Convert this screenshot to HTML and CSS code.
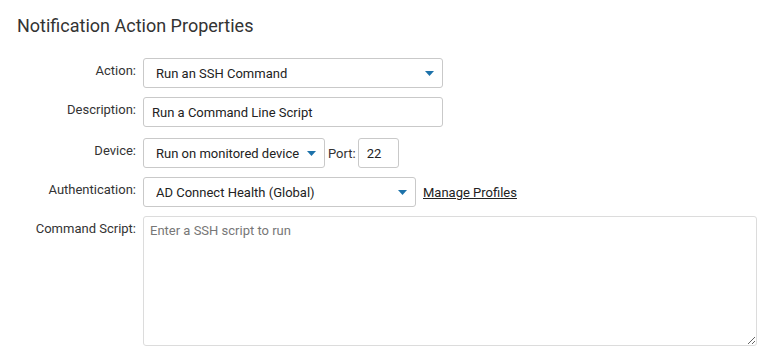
FILE: index.html
```html
<!DOCTYPE html>
<html lang="en">
<head>
  <meta charset="UTF-8">
  <meta name="viewport" content="width=device-width, initial-scale=1.0">
  <title>Notification Action Properties</title>
  <link rel="stylesheet" href="styles.css">
</head>
<body>
  <div class="panel">
    <h2>Notification Action Properties</h2>

    <div class="form">
      <label for="action">Action:</label>
      <div class="field">
        <div class="select-wrap wide">
          <select id="action">
            <option>Run an SSH Command</option>
          </select>
          <svg class="arrow" width="9" height="5" viewBox="0 0 9 5"><path d="M0 0h9L4.5 5z"/></svg>
        </div>
      </div>

      <label for="description">Description:</label>
      <div class="field">
        <input type="text" id="description" class="wide" value="Run a Command Line Script">
      </div>

      <label for="device" class="row-device">Device:</label>
      <div class="field row-device">
        <div class="select-wrap device">
          <select id="device">
            <option>Run on monitored device</option>
          </select>
          <svg class="arrow" width="9" height="5" viewBox="0 0 9 5"><path d="M0 0h9L4.5 5z"/></svg>
        </div>
        <label for="port" class="inline">Port:</label>
        <input type="text" id="port" class="port" value="22">
      </div>

      <label for="auth">Authentication:</label>
      <div class="field">
        <div class="select-wrap auth">
          <select id="auth">
            <option>AD Connect Health (Global)</option>
          </select>
          <svg class="arrow" width="9" height="5" viewBox="0 0 9 5"><path d="M0 0h9L4.5 5z"/></svg>
        </div>
        <a href="#" class="manage">Manage Profiles</a>
      </div>

      <label for="script">Command Script:</label>
      <div class="field">
        <textarea id="script" placeholder="Enter a SSH script to run"></textarea>
      </div>
    </div>
  </div>
</body>
</html>
```

FILE: styles.css
```css
body {
  margin: 0;
  font-family: Roboto, Arial, sans-serif;
  color: #333;
  background: #fff;
}
.panel {
  padding: 14px 17px 0 17px;
}
h2 {
  font-size: 18px;
  font-weight: normal;
  color: #333;
  margin: 0 0 20px 0;
  line-height: 24px;
}
.form {
  display: grid;
  grid-template-columns: 119px 1fr;
  column-gap: 7px;
  row-gap: 9px;
}
.form > label {
  text-align: right;
  font-size: 13px;
  line-height: 18px;
  padding-top: 4px;
  color: #333;
}
.form > .row-device {
  margin-top: 2px;
}
.field {
  display: flex;
  align-items: center;
}
input, select, textarea {
  font-family: Roboto, Arial, sans-serif;
  font-size: 13px;
  color: #222;
  border: 1px solid #c9c9c9;
  border-radius: 3px;
  background: #fff;
  box-sizing: border-box;
  outline: none;
}
input {
  height: 30px;
  padding: 0 8px;
}
.wide {
  width: 300px;
}
.select-wrap {
  position: relative;
}
.select-wrap select {
  appearance: none;
  -webkit-appearance: none;
  width: 100%;
  height: 30px;
  padding: 0 22px 0 12px;
}
.select-wrap .arrow {
  position: absolute;
  right: 9px;
  top: 13px;
  fill: #1d72aa;
}
.device {
  width: 182px;
}
.auth {
  width: 273px;
}
.inline {
  font-size: 13px;
  margin: 0 2px 0 3px;
  color: #333;
}
.port {
  width: 41px;
}
.manage {
  margin-left: 7px;
  font-size: 13px;
  color: #222;
  text-decoration: underline;
}
textarea {
  width: 614px;
  height: 130px;
  padding: 6px 6px;
  border-color: #dcdcdc;
  resize: both;
}
textarea::placeholder {
  color: #777;
}
```
